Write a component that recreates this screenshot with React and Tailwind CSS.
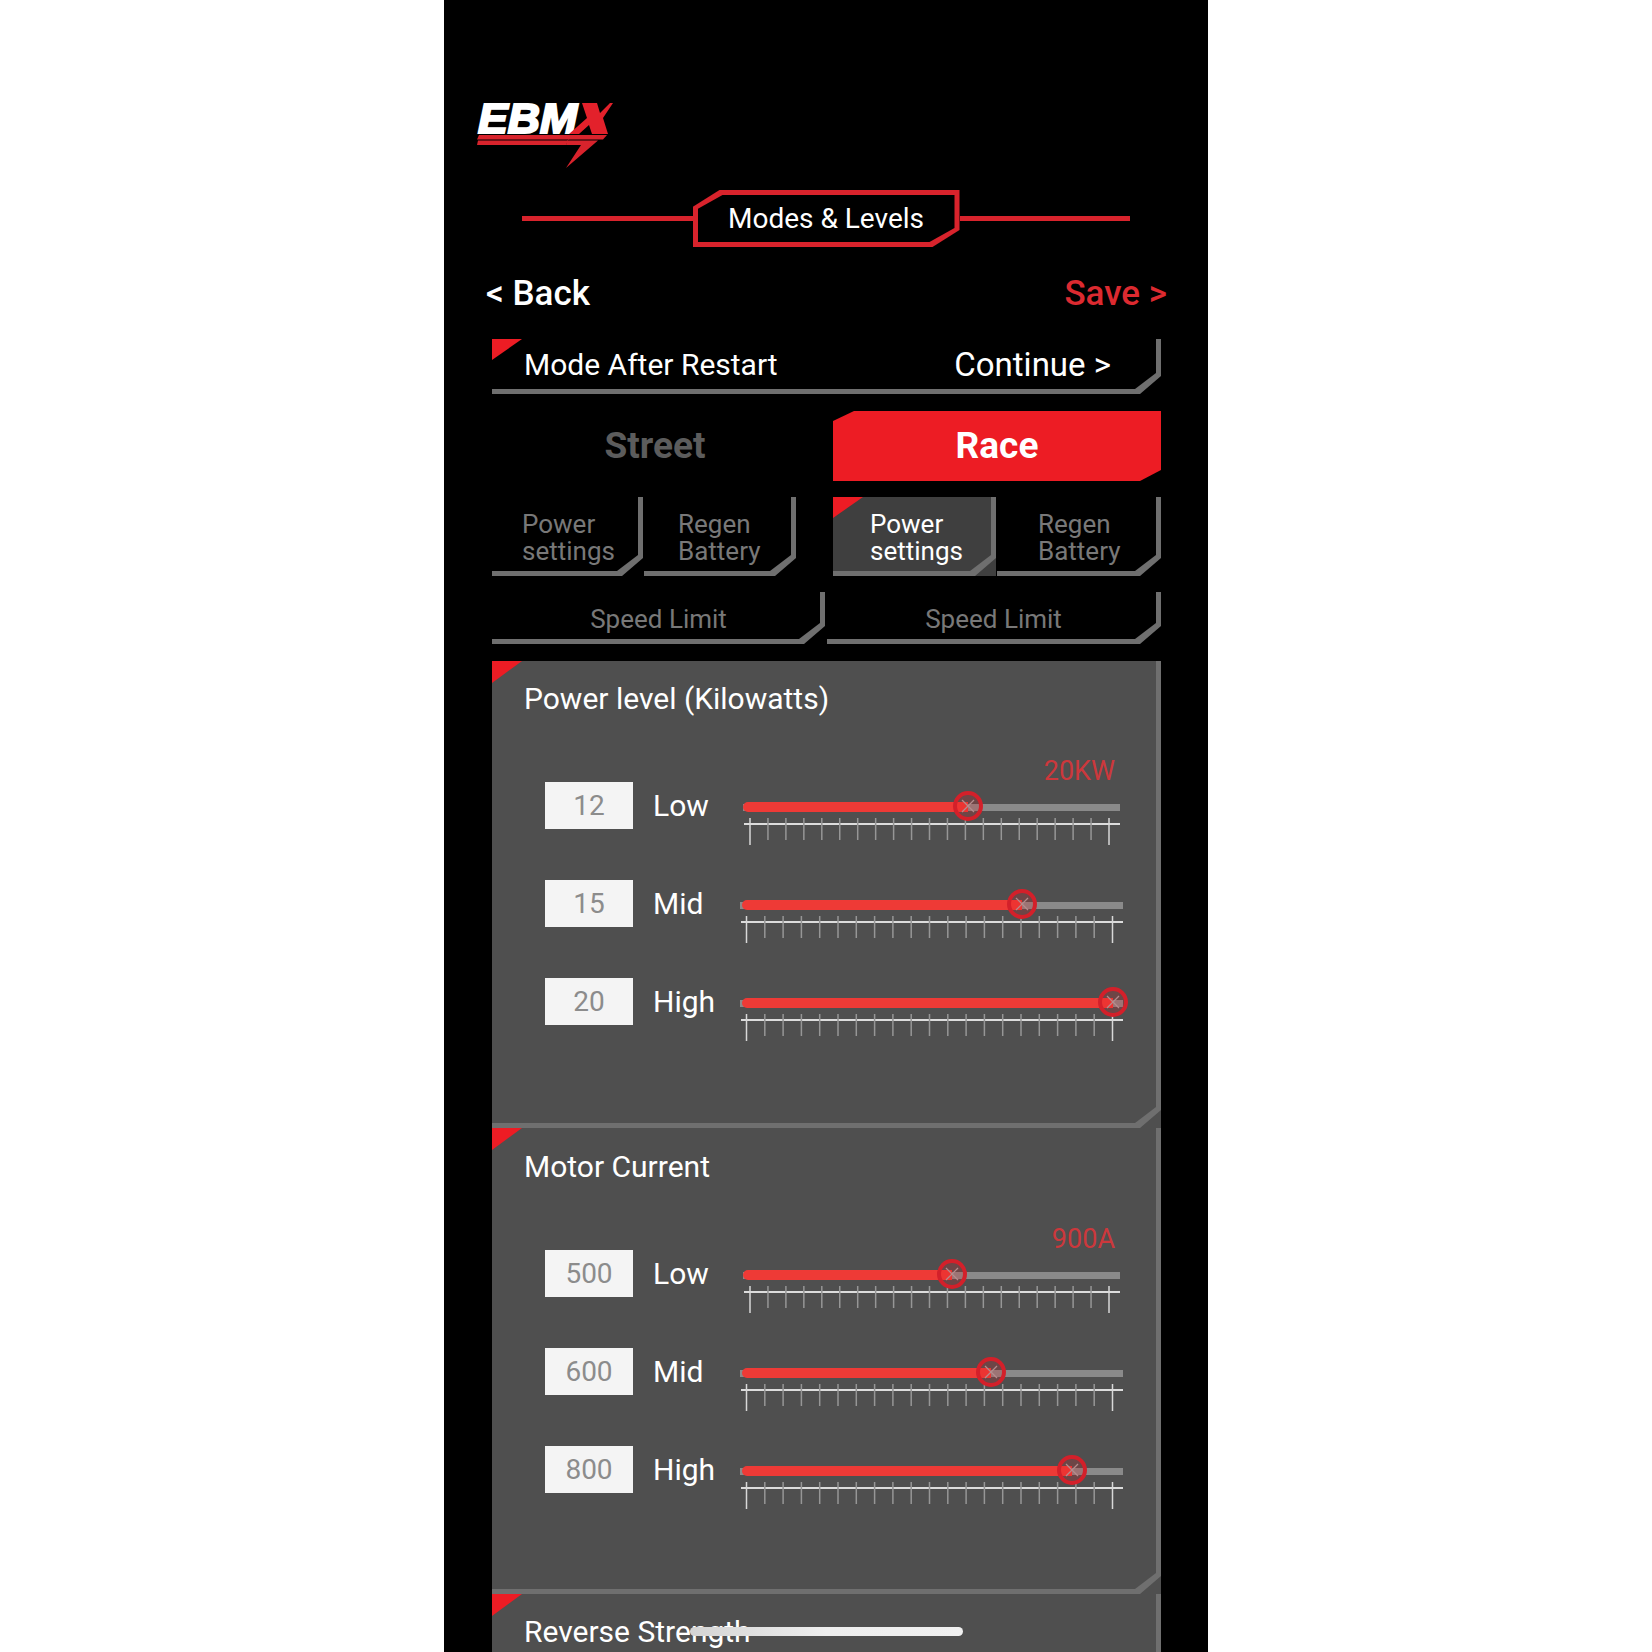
const TICKS = Array.from({ length: 21 }, (_, i) => i)

function Logo() {
  return (
    <svg width="160" height="90" viewBox="0 0 160 90">
      <text x="13" y="43" fontFamily="Liberation Sans" fontWeight="700" fontStyle="italic" fontSize="42" fill="#fff" stroke="#fff" strokeWidth="2.2" textLength="99" lengthAdjust="spacingAndGlyphs">EBM</text>
      <polygon points="117,13 132,13 135,23 145,13 148,13 138,28 143,44 127,44 124,35 114,44 104,44 122,28" fill="#e3212b" />
      <polygon points="14,45 107,45 104,49.5 12,49.5" fill="#d8232c" />
      <polygon points="13,50.5 103,50.5 101,55 12,55" fill="#d8232c" />
      <polygon points="106,45 142,45 138,49.5 103,49.5" fill="#d8232c" />
      <polygon points="102,50.5 133,50.5 101,78 116,55 101,55" fill="#d8232c" />
    </svg>
  )
}

function RedCorner({ className = 'w-[30px] h-[21px]' }) {
  return <div className={`absolute left-0 top-0 bg-[#ed1c24] [clip-path:polygon(0_0,100%_0,0_100%)] ${className}`} />
}

// cut corner at bottom right of the L shaped border
function Notch({ fill = '#000' }) {
  return (
    <svg className="absolute -right-[5px] -bottom-[5px]" width="28" height="21" viewBox="0 0 28 21">
      <polygon points="28,0 28,21 2,21" fill={fill} />
      <polygon points="23,0 28,0 28,3 7,21 0,21 0,16 2,16" fill="#6f6f6f" />
    </svg>
  )
}

function Tab({ width, lines, active, pad }) {
  return (
    <div className={`relative h-full border-r-[5px] border-b-[5px] border-[#6f6f6f] ${width} ${active ? 'bg-[#3f3f3f]' : ''}`}>
      {active && <RedCorner />}
      <div className={`h-full flex flex-col justify-center pt-[8px] text-[26px] leading-[27.5px] ${active ? 'text-white' : 'text-[#787878]'} ${pad}`}>
        {lines.map(l => <span key={l}>{l}</span>)}
      </div>
      <Notch fill={active ? '#3f3f3f' : '#000'} />
    </div>
  )
}

function Ruler({ width, inset }) {
  const x0 = inset
  const x1 = width - inset - 4
  return (
    <svg className="block mt-[7px]" width={width} height="27">
      <rect x="1" y="5" width={width - 1} height="2" fill="#dcdcdc" />
      {TICKS.map(i => {
        const x = x0 + ((x1 - x0) * i) / 20
        const major = i === 0 || i === 20
        return <rect key={i} x={x - 0.75} y="0" width="1.5" height={major ? 27 : 22} fill={major ? '#d8d8d8' : '#969696'} />
      })}
    </svg>
  )
}

function Thumb() {
  return (
    <svg className="absolute -top-[12px] -translate-x-1/2" style={{ left: '100%' }} width="32" height="32" viewBox="0 0 32 32">
      <line x1="10" y1="10" x2="22" y2="22" stroke="#a8a8a8" strokeWidth="1.2" />
      <line x1="22" y1="10" x2="10" y2="22" stroke="#a8a8a8" strokeWidth="1.2" />
      <circle cx="16" cy="16" r="13" fill="#ed1c24" fillOpacity="0.2" stroke="#d3202a" strokeWidth="4" />
    </svg>
  )
}

function Slider({ first, pos }) {
  const width = first ? 377 : 383
  return (
    <div className={`relative h-[47px] ${first ? 'w-[377px] ml-[3px]' : 'w-[383px]'}`}>
      <div className="relative h-[7px] mt-[22px] bg-[#8a8a8a]">
        <div className={`absolute -top-[2px] h-[10px] rounded-l-full bg-[#ee3a36] ${first ? 'left-0' : 'left-[2px]'}`} style={{ width: pos }}>
          <Thumb />
        </div>
      </div>
      <Ruler width={width} inset={first ? 7 : 6.5} />
    </div>
  )
}

function Row({ value, label, first, pos }) {
  return (
    <div className="flex h-[47px]">
      <div className="w-[88px] h-[47px] flex items-center justify-center bg-[#f4f4f4] text-[28px] text-[#8c8c8c]">{value}</div>
      <div className="w-[107px] pl-[20px] text-[30px] leading-[48px] text-white">{label}</div>
      <Slider first={first} pos={pos} />
    </div>
  )
}

function Panel({ title, max, rows, height = 'h-[467px]', top = 'pt-[21px]' }) {
  return (
    <div className={`relative bg-[#4f4f4f] border-r-[5px] border-b-[5px] border-[#6f6f6f] ${height}`}>
      <RedCorner className="w-[30px] h-[22px]" />
      <div className={`pl-[32px] text-[30px] leading-[34px] text-white ${top}`}>{title}</div>
      <div className="mt-[44px] pr-[41px] text-right text-[27px] leading-[22px] text-[#cc383c]">{max}</div>
      <div className="flex flex-col gap-[51px] pl-[53px]">
        {rows.map((r, i) => <Row key={r.label} {...r} first={i === 0} />)}
      </div>
      <Notch fill="#4f4f4f" />
    </div>
  )
}

export default function App() {
  return (
    <div className="min-h-[1652px] bg-white font-['Roboto',sans-serif]">
      <div className="relative mx-auto w-[764px] h-[1652px] overflow-hidden bg-black">
        <div className="pl-[21px] pt-[90px]">
          <Logo />
        </div>

        {/* Title */}
        <div className="flex items-center mt-[10px] px-[78px]">
          <div className="flex-1 h-[5px] -mt-[1px] bg-[#d8232c]" />
          <div className="w-[267px] h-[57px] p-[5px] bg-[#d8232c] [clip-path:polygon(27px_0,267px_0,267px_40px,240px_57px,0_57px,0_17px)]">
            <div className="w-[257px] h-[47px] flex items-center justify-center bg-black text-[28px] text-white [clip-path:polygon(25px_0,257px_0,257px_33px,232px_47px,0_47px,0_14px)]">Modes &amp; Levels</div>
          </div>
          <div className="flex-1 h-[5px] -mt-[1px] bg-[#d8232c]" />
        </div>

        <div className="flex justify-between items-center h-[40px] mt-[27px] px-[41px] text-[35px] font-medium">
          <span className="text-white pl-[1px]">&lt; Back</span>
          <span className="text-[#dc2a30]">Save &gt;</span>
        </div>

        <div className="pl-[48px] pr-[47px]">
          <div className="relative flex items-center justify-between h-[55px] mt-[25px] pt-[2px] pl-[32px] pr-[45px] border-r-[5px] border-b-[5px] border-[#6f6f6f]">
            <RedCorner />
            <span className="-mt-[2px] text-[30px] text-white">Mode After Restart</span>
            <span className="text-[33px] font-[450] text-white">Continue &gt;</span>
            <Notch />
          </div>

          <div className="flex h-[70px] mt-[17px] text-[37px] font-bold">
            <div className="w-[326px] flex items-center justify-center text-[#5c5c5c]">Street</div>
            <div className="ml-[15px] w-[328px] flex items-center justify-center bg-[#ed1c24] text-white [clip-path:polygon(21px_0,100%_0,100%_calc(100%-11px),calc(100%-21px)_100%,0_100%,0_10px)]">Race</div>
          </div>

          <div className="flex h-[79px] mt-[16px]">
            <Tab width="w-[151px]" lines={['Power', 'settings']} pad="pl-[30px]" />
            <div className="w-[1px]" />
            <Tab width="w-[152px]" lines={['Regen', 'Battery']} pad="pl-[34px]" />
            <div className="w-[37px]" />
            <Tab width="w-[163px]" lines={['Power', 'settings']} active pad="pl-[37px]" />
            <div className="w-[1px]" />
            <Tab width="w-[164px]" lines={['Regen', 'Battery']} pad="pl-[41px]" />
          </div>

          <div className="flex gap-[2px] h-[52px] mt-[16px]">
            <Tab width="w-[333px]" lines={['Speed Limit']} pad="items-center pl-[5px]" />
            <Tab width="w-[334px]" lines={['Speed Limit']} pad="items-center pl-[4px]" />
          </div>

          <div className="mt-[17px]">
            <Panel title="Power level (Kilowatts)" max="20KW" rows={[
              { value: '12', label: 'Low', pos: 225 },
              { value: '15', label: 'Mid', pos: 280 },
              { value: '20', label: 'High', pos: 371 },
            ]} />
            <Panel title="Motor Current" max="900A" height="h-[466px]" top="pt-[22px]" rows={[
              { value: '500', label: 'Low', pos: 209 },
              { value: '600', label: 'Mid', pos: 249 },
              { value: '800', label: 'High', pos: 330 },
            ]} />
            <Panel title="Reverse Strength" top="pt-[21px]" rows={[]} />
          </div>
        </div>

        {/* home indicator */}
        <div className="absolute left-[246px] bottom-[16px] w-[273px] h-[9px] rounded-full bg-gradient-to-r from-[#d4d4d4] via-[#eeeeee] to-[#f0f0f0]" />
      </div>
    </div>
  )
}
